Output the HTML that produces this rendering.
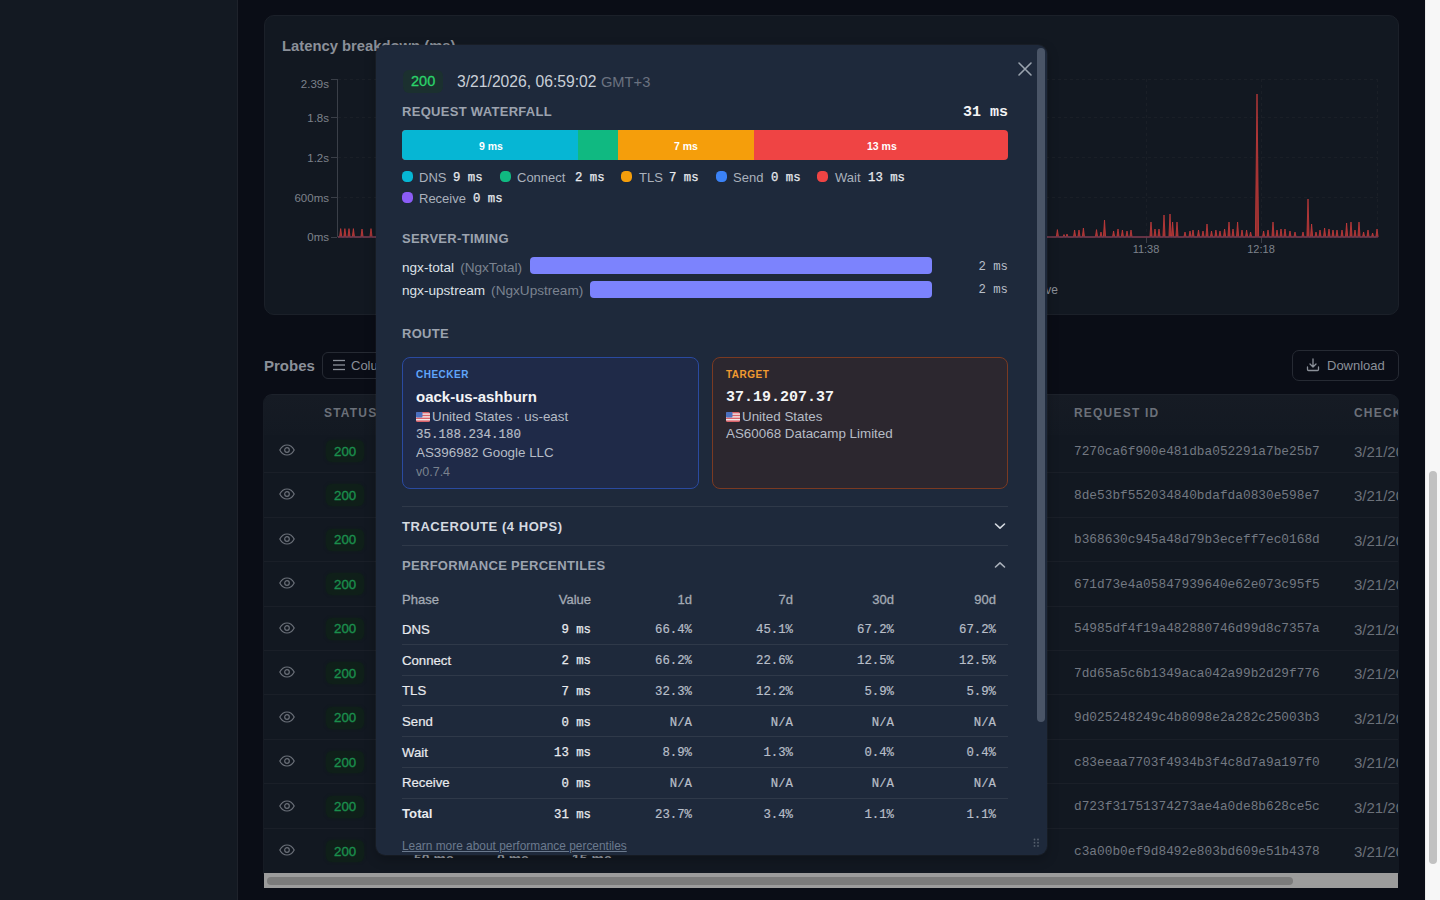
<!DOCTYPE html>
<html><head><meta charset="utf-8">
<style>
*{box-sizing:border-box;margin:0;padding:0}
html,body{width:1440px;height:900px;overflow:hidden;background:#0a0d16;font-family:"Liberation Sans",sans-serif;}
.abs{position:absolute}
.mono{font-family:"Liberation Mono",monospace}
#sidebar{left:0;top:0;width:238px;height:900px;background:#131922;border-right:1px solid #1e222b}
#vscroll{left:1425px;top:0;width:15px;height:900px;background:#f7f7f7;border-left:1px solid #ececec}
#vthumb{left:1429px;top:471px;width:8px;height:393px;border-radius:4px;background:#c1c1c1}
.card{background:#121821;border:1px solid #1b2029;border-radius:10px}
.t{position:absolute;white-space:nowrap;line-height:1}
</style></head><body>
<div id="sidebar" class="abs"></div>
<div id="vscroll" class="abs"></div>
<div id="vthumb" class="abs"></div>

<!-- chart card -->
<div class="abs card" style="left:264px;top:15px;width:1135px;height:300px"></div>
<div class="t" style="left:282px;top:39px;font-size:14.8px;font-weight:bold;color:#8b9099">Latency breakdown (ms)</div>
<svg class="abs" style="left:0;top:0" width="1440" height="330">
 <g font-family="Liberation Sans" font-size="11.5" fill="#7d828b" text-anchor="end">
  <text x="329" y="88">2.39s</text>
  <text x="329" y="122">1.8s</text>
  <text x="329" y="162">1.2s</text>
  <text x="329" y="202">600ms</text>
  <text x="329" y="241">0ms</text>
 </g>
 <g stroke="#3a3f48" stroke-width="1">
  <line x1="337.5" y1="79" x2="337.5" y2="237"/>
  <line x1="331" y1="79.5" x2="337" y2="79.5"/>
  <line x1="331" y1="117.5" x2="337" y2="117.5"/>
  <line x1="331" y1="157.5" x2="337" y2="157.5"/>
  <line x1="331" y1="197.5" x2="337" y2="197.5"/>
  <line x1="331" y1="237.5" x2="337" y2="237.5"/>
  <line x1="1146.5" y1="237" x2="1146.5" y2="243"/>
  <line x1="1261.5" y1="237" x2="1261.5" y2="243"/>
 </g>
 <g stroke="#1a1f27" stroke-width="1" stroke-dasharray="3 3">
  <line x1="338" y1="79.5" x2="1378" y2="79.5"/>
  <line x1="338" y1="117.5" x2="1378" y2="117.5"/>
  <line x1="338" y1="157.5" x2="1378" y2="157.5"/>
  <line x1="338" y1="197.5" x2="1378" y2="197.5"/>
  <line x1="1146.5" y1="79" x2="1146.5" y2="237"/>
  <line x1="1261.5" y1="79" x2="1261.5" y2="237"/>
  <line x1="1377.5" y1="79" x2="1377.5" y2="237"/>
 </g>
 <path d="M338 237 L339.6 237 L340.7 228.6 L341.8 237 L343.8 237 L344.9 228.6 L346.0 237 L347.9 237 L349.0 228.6 L350.1 237 L352.3 237 L353.4 228.6 L354.5 237 L360.9 237 L362.0 229.0 L363.1 237 L369.9 237 L371.0 228.6 L372.1 237 L1056.3 237 L1057.4 229.6 L1058.5 237 L1062.9 237 L1064.0 234.5 L1065.1 237 L1065.9 237 L1067.0 234.0 L1068.1 237 L1073.5 237 L1074.6 230.0 L1075.7 237 L1077.9 237 L1079.0 230.0 L1080.1 237 L1082.3 237 L1083.4 228.0 L1084.5 237 L1095.4 237 L1096.5 229.6 L1097.6 237 L1099.9 237 L1101.0 232.0 L1102.1 237 L1103.4 237 L1104.5 220.0 L1105.6 237 L1112.5 237 L1113.6 231.0 L1114.7 237 L1116.9 237 L1118.0 229.0 L1119.1 237 L1121.3 237 L1122.4 230.0 L1123.5 237 L1125.9 237 L1127.0 231.0 L1128.1 237 L1129.9 237 L1131.0 230.0 L1132.1 237 L1149.9 237 L1151.0 222.0 L1152.1 237 L1153.9 237 L1155.0 229.0 L1156.1 237 L1157.9 237 L1159.0 229.0 L1160.1 237 L1162.9 237 L1164.0 215.0 L1165.1 237 L1168.9 237 L1170.0 214.0 L1171.1 237 L1171.5 237 L1172.6 222.0 L1173.7 237 L1175.9 237 L1177.0 222.0 L1178.1 237 L1183.9 237 L1185.0 232.0 L1186.1 237 L1188.9 237 L1190.0 231.0 L1191.1 237 L1191.9 237 L1193.0 230.0 L1194.1 237 L1197.4 237 L1198.5 230.0 L1199.6 237 L1201.9 237 L1203.0 231.0 L1204.1 237 L1205.9 237 L1207.0 224.0 L1208.1 237 L1210.4 237 L1211.5 231.0 L1212.6 237 L1214.8 237 L1215.9 230.0 L1217.0 237 L1218.9 237 L1220.0 231.0 L1221.1 237 L1223.5 237 L1224.6 229.0 L1225.7 237 L1227.9 237 L1229.0 222.0 L1230.1 237 L1231.9 237 L1233.0 229.0 L1234.1 237 L1236.5 237 L1237.6 222.0 L1238.7 237 L1240.9 237 L1242.0 230.0 L1243.1 237 L1245.5 237 L1246.6 230.0 L1247.7 237 L1249.5 237 L1250.6 232.0 L1251.7 237 L1255.4 237 L1257.0 94.0 L1258.6 237 L1262.5 237 L1263.6 231.0 L1264.7 237 L1266.9 237 L1268.0 230.0 L1269.1 237 L1271.9 237 L1273.0 222.0 L1274.1 237 L1275.9 237 L1277.0 230.0 L1278.1 237 L1279.9 237 L1281.0 229.0 L1282.1 237 L1283.9 237 L1285.0 229.0 L1286.1 237 L1288.9 237 L1290.0 231.0 L1291.1 237 L1293.9 237 L1295.0 232.0 L1296.1 237 L1301.9 237 L1303.0 232.0 L1304.1 237 L1306.9 237 L1308.0 199.0 L1309.1 237 L1310.5 237 L1311.6 224.0 L1312.7 237 L1314.9 237 L1316.0 232.0 L1317.1 237 L1318.9 237 L1320.0 230.0 L1321.1 237 L1323.5 237 L1324.6 228.0 L1325.7 237 L1327.9 237 L1329.0 229.0 L1330.1 237 L1331.9 237 L1333.0 230.0 L1334.1 237 L1335.9 237 L1337.0 230.0 L1338.1 237 L1340.9 237 L1342.0 230.0 L1343.1 237 L1345.5 237 L1346.6 223.0 L1347.7 237 L1349.9 237 L1351.0 222.0 L1352.1 237 L1353.9 237 L1355.0 230.0 L1356.1 237 L1357.9 237 L1359.0 222.0 L1360.1 237 L1362.5 237 L1363.6 232.0 L1364.7 237 L1366.9 237 L1368.0 230.0 L1369.1 237 L1371.5 237 L1372.6 233.0 L1373.7 237 L1375.9 237 L1377.0 229.0 L1378.1 237 L1378 237" fill="#98302f" stroke="#c63b3b" stroke-width="0.8"/>
 <line x1="338" y1="237" x2="1378" y2="237" stroke="#69384f" stroke-width="1.3"/>
 <g font-family="Liberation Sans" font-size="11" fill="#7d828b" text-anchor="middle">
  <text x="1146" y="253">11:38</text>
  <text x="1261" y="253">12:18</text>
 </g>
 <text x="1058" y="294" font-family="Liberation Sans" font-size="12" fill="#8b9099" text-anchor="end">Live</text>
</svg>

<!-- probes header -->
<div class="t" style="left:264px;top:358px;font-size:15px;font-weight:bold;color:#8b9099">Probes</div>
<div class="abs" style="left:322px;top:352px;width:120px;height:27px;border:1px solid #262a33;border-radius:6px"></div>
<svg class="abs" style="left:332px;top:359px" width="14" height="12"><g stroke="#8b9099" stroke-width="1.3"><line x1="1" y1="1.5" x2="13" y2="1.5"/><line x1="1" y1="6" x2="13" y2="6"/><line x1="1" y1="10.5" x2="13" y2="10.5"/></g></svg>
<div class="t" style="left:351px;top:359px;font-size:13px;color:#8b9099">Columns</div>

<div class="abs" style="left:1291.5px;top:349.5px;width:107.5px;height:31px;border:1px solid #262a33;border-radius:7px"></div>
<svg class="abs" style="left:1305px;top:357px" width="16" height="16" viewBox="0 0 16 16" fill="none" stroke="#8b9099" stroke-width="1.3" stroke-linecap="round" stroke-linejoin="round"><path d="M8 2v8M5 7l3 3 3-3M2.5 10v2.5a1 1 0 0 0 1 1h9a1 1 0 0 0 1-1V10"/></svg>
<div class="t" style="left:1327px;top:359px;font-size:13px;color:#8b9099">Download</div>

<!-- table -->
<div class="abs" style="left:263px;top:394px;width:1136px;height:480px;background:#121821;border-radius:9px 9px 0 0;border-top:1px solid #1d222b;border-left:1px solid #161b24"></div><div class="abs" style="left:264px;top:395px;width:1135px;height:40px;background:linear-gradient(#161b24,#131922);border-radius:8px 8px 0 0"></div>
<div id="rows"></div>
<div class="t" style="left:324px;top:407px;font-size:12px;font-weight:bold;letter-spacing:1.2px;color:#6b7079">STATUS</div>
<div class="t" style="left:1074px;top:407px;font-size:12px;font-weight:bold;letter-spacing:1.2px;color:#6b7079">REQUEST ID</div>
<div class="abs" style="left:1354px;top:400px;width:44px;height:20px;overflow:hidden"><div class="t" style="left:0;top:7px;font-size:12px;font-weight:bold;letter-spacing:1.2px;color:#6b7079">CHECKED</div></div>
<svg class="abs" style="left:278px;top:443px" width="18" height="14" viewBox="0 0 18 14" fill="none" stroke="#6b7079" stroke-width="1.2"><path d="M1.8 7C3.6 3.6 6.2 2 9 2S14.4 3.6 16.2 7C14.4 10.4 11.8 12 9 12S3.6 10.4 1.8 7Z"/><circle cx="9" cy="7" r="2.3"/></svg>
<div class="abs" style="left:326px;top:440.0px;width:38px;height:22px;border-radius:6px;background:#0f1f19;box-shadow:0 0 3px #0f1f19"></div>
<div class="t" style="left:334px;top:444.5px;font-size:13.3px;font-weight:normal;-webkit-text-stroke:0.35px #1b8f4d;color:#1b8f4d">200</div>
<div class="t mono" style="left:1074px;top:445.5px;font-size:12.8px;color:#737882">7270ca6f900e481dba052291a7be25b7</div>
<div class="abs" style="left:1354px;top:441.0px;width:44px;height:22px;overflow:hidden"><div class="t" style="left:0;top:3px;font-size:15px;color:#6b7079">3/21/2026</div></div>
<div class="abs" style="left:264px;top:472.1px;width:1134px;height:1px;background:#1a1f28"></div>
<svg class="abs" style="left:278px;top:487px" width="18" height="14" viewBox="0 0 18 14" fill="none" stroke="#6b7079" stroke-width="1.2"><path d="M1.8 7C3.6 3.6 6.2 2 9 2S14.4 3.6 16.2 7C14.4 10.4 11.8 12 9 12S3.6 10.4 1.8 7Z"/><circle cx="9" cy="7" r="2.3"/></svg>
<div class="abs" style="left:326px;top:484.4px;width:38px;height:22px;border-radius:6px;background:#0f1f19;box-shadow:0 0 3px #0f1f19"></div>
<div class="t" style="left:334px;top:488.9px;font-size:13.3px;font-weight:normal;-webkit-text-stroke:0.35px #1b8f4d;color:#1b8f4d">200</div>
<div class="t mono" style="left:1074px;top:489.9px;font-size:12.8px;color:#737882">8de53bf552034840bdafda0830e598e7</div>
<div class="abs" style="left:1354px;top:485.4px;width:44px;height:22px;overflow:hidden"><div class="t" style="left:0;top:3px;font-size:15px;color:#6b7079">3/21/2026</div></div>
<div class="abs" style="left:264px;top:516.6px;width:1134px;height:1px;background:#1a1f28"></div>
<svg class="abs" style="left:278px;top:532px" width="18" height="14" viewBox="0 0 18 14" fill="none" stroke="#6b7079" stroke-width="1.2"><path d="M1.8 7C3.6 3.6 6.2 2 9 2S14.4 3.6 16.2 7C14.4 10.4 11.8 12 9 12S3.6 10.4 1.8 7Z"/><circle cx="9" cy="7" r="2.3"/></svg>
<div class="abs" style="left:326px;top:528.9px;width:38px;height:22px;border-radius:6px;background:#0f1f19;box-shadow:0 0 3px #0f1f19"></div>
<div class="t" style="left:334px;top:533.4px;font-size:13.3px;font-weight:normal;-webkit-text-stroke:0.35px #1b8f4d;color:#1b8f4d">200</div>
<div class="t mono" style="left:1074px;top:534.4px;font-size:12.8px;color:#737882">b368630c945a48d79b3eceff7ec0168d</div>
<div class="abs" style="left:1354px;top:529.9px;width:44px;height:22px;overflow:hidden"><div class="t" style="left:0;top:3px;font-size:15px;color:#6b7079">3/21/2026</div></div>
<div class="abs" style="left:264px;top:561.0px;width:1134px;height:1px;background:#1a1f28"></div>
<svg class="abs" style="left:278px;top:576px" width="18" height="14" viewBox="0 0 18 14" fill="none" stroke="#6b7079" stroke-width="1.2"><path d="M1.8 7C3.6 3.6 6.2 2 9 2S14.4 3.6 16.2 7C14.4 10.4 11.8 12 9 12S3.6 10.4 1.8 7Z"/><circle cx="9" cy="7" r="2.3"/></svg>
<div class="abs" style="left:326px;top:573.4px;width:38px;height:22px;border-radius:6px;background:#0f1f19;box-shadow:0 0 3px #0f1f19"></div>
<div class="t" style="left:334px;top:577.9px;font-size:13.3px;font-weight:normal;-webkit-text-stroke:0.35px #1b8f4d;color:#1b8f4d">200</div>
<div class="t mono" style="left:1074px;top:578.9px;font-size:12.8px;color:#737882">671d73e4a05847939640e62e073c95f5</div>
<div class="abs" style="left:1354px;top:574.4px;width:44px;height:22px;overflow:hidden"><div class="t" style="left:0;top:3px;font-size:15px;color:#6b7079">3/21/2026</div></div>
<div class="abs" style="left:264px;top:605.5px;width:1134px;height:1px;background:#1a1f28"></div>
<svg class="abs" style="left:278px;top:621px" width="18" height="14" viewBox="0 0 18 14" fill="none" stroke="#6b7079" stroke-width="1.2"><path d="M1.8 7C3.6 3.6 6.2 2 9 2S14.4 3.6 16.2 7C14.4 10.4 11.8 12 9 12S3.6 10.4 1.8 7Z"/><circle cx="9" cy="7" r="2.3"/></svg>
<div class="abs" style="left:326px;top:617.8px;width:38px;height:22px;border-radius:6px;background:#0f1f19;box-shadow:0 0 3px #0f1f19"></div>
<div class="t" style="left:334px;top:622.3px;font-size:13.3px;font-weight:normal;-webkit-text-stroke:0.35px #1b8f4d;color:#1b8f4d">200</div>
<div class="t mono" style="left:1074px;top:623.3px;font-size:12.8px;color:#737882">54985df4f19a482880746d99d8c7357a</div>
<div class="abs" style="left:1354px;top:618.8px;width:44px;height:22px;overflow:hidden"><div class="t" style="left:0;top:3px;font-size:15px;color:#6b7079">3/21/2026</div></div>
<div class="abs" style="left:264px;top:650.0px;width:1134px;height:1px;background:#1a1f28"></div>
<svg class="abs" style="left:278px;top:665px" width="18" height="14" viewBox="0 0 18 14" fill="none" stroke="#6b7079" stroke-width="1.2"><path d="M1.8 7C3.6 3.6 6.2 2 9 2S14.4 3.6 16.2 7C14.4 10.4 11.8 12 9 12S3.6 10.4 1.8 7Z"/><circle cx="9" cy="7" r="2.3"/></svg>
<div class="abs" style="left:326px;top:662.2px;width:38px;height:22px;border-radius:6px;background:#0f1f19;box-shadow:0 0 3px #0f1f19"></div>
<div class="t" style="left:334px;top:666.8px;font-size:13.3px;font-weight:normal;-webkit-text-stroke:0.35px #1b8f4d;color:#1b8f4d">200</div>
<div class="t mono" style="left:1074px;top:667.8px;font-size:12.8px;color:#737882">7dd65a5c6b1349aca042a99b2d29f776</div>
<div class="abs" style="left:1354px;top:663.2px;width:44px;height:22px;overflow:hidden"><div class="t" style="left:0;top:3px;font-size:15px;color:#6b7079">3/21/2026</div></div>
<div class="abs" style="left:264px;top:694.4px;width:1134px;height:1px;background:#1a1f28"></div>
<svg class="abs" style="left:278px;top:710px" width="18" height="14" viewBox="0 0 18 14" fill="none" stroke="#6b7079" stroke-width="1.2"><path d="M1.8 7C3.6 3.6 6.2 2 9 2S14.4 3.6 16.2 7C14.4 10.4 11.8 12 9 12S3.6 10.4 1.8 7Z"/><circle cx="9" cy="7" r="2.3"/></svg>
<div class="abs" style="left:326px;top:706.7px;width:38px;height:22px;border-radius:6px;background:#0f1f19;box-shadow:0 0 3px #0f1f19"></div>
<div class="t" style="left:334px;top:711.2px;font-size:13.3px;font-weight:normal;-webkit-text-stroke:0.35px #1b8f4d;color:#1b8f4d">200</div>
<div class="t mono" style="left:1074px;top:712.2px;font-size:12.8px;color:#737882">9d025248249c4b8098e2a282c25003b3</div>
<div class="abs" style="left:1354px;top:707.7px;width:44px;height:22px;overflow:hidden"><div class="t" style="left:0;top:3px;font-size:15px;color:#6b7079">3/21/2026</div></div>
<div class="abs" style="left:264px;top:738.9px;width:1134px;height:1px;background:#1a1f28"></div>
<svg class="abs" style="left:278px;top:754px" width="18" height="14" viewBox="0 0 18 14" fill="none" stroke="#6b7079" stroke-width="1.2"><path d="M1.8 7C3.6 3.6 6.2 2 9 2S14.4 3.6 16.2 7C14.4 10.4 11.8 12 9 12S3.6 10.4 1.8 7Z"/><circle cx="9" cy="7" r="2.3"/></svg>
<div class="abs" style="left:326px;top:751.2px;width:38px;height:22px;border-radius:6px;background:#0f1f19;box-shadow:0 0 3px #0f1f19"></div>
<div class="t" style="left:334px;top:755.7px;font-size:13.3px;font-weight:normal;-webkit-text-stroke:0.35px #1b8f4d;color:#1b8f4d">200</div>
<div class="t mono" style="left:1074px;top:756.7px;font-size:12.8px;color:#737882">c83eeaa7703f4934b3f4c8d7a9a197f0</div>
<div class="abs" style="left:1354px;top:752.2px;width:44px;height:22px;overflow:hidden"><div class="t" style="left:0;top:3px;font-size:15px;color:#6b7079">3/21/2026</div></div>
<div class="abs" style="left:264px;top:783.3px;width:1134px;height:1px;background:#1a1f28"></div>
<svg class="abs" style="left:278px;top:799px" width="18" height="14" viewBox="0 0 18 14" fill="none" stroke="#6b7079" stroke-width="1.2"><path d="M1.8 7C3.6 3.6 6.2 2 9 2S14.4 3.6 16.2 7C14.4 10.4 11.8 12 9 12S3.6 10.4 1.8 7Z"/><circle cx="9" cy="7" r="2.3"/></svg>
<div class="abs" style="left:326px;top:795.6px;width:38px;height:22px;border-radius:6px;background:#0f1f19;box-shadow:0 0 3px #0f1f19"></div>
<div class="t" style="left:334px;top:800.1px;font-size:13.3px;font-weight:normal;-webkit-text-stroke:0.35px #1b8f4d;color:#1b8f4d">200</div>
<div class="t mono" style="left:1074px;top:801.1px;font-size:12.8px;color:#737882">d723f31751374273ae4a0de8b628ce5c</div>
<div class="abs" style="left:1354px;top:796.6px;width:44px;height:22px;overflow:hidden"><div class="t" style="left:0;top:3px;font-size:15px;color:#6b7079">3/21/2026</div></div>
<div class="abs" style="left:264px;top:827.8px;width:1134px;height:1px;background:#1a1f28"></div>
<svg class="abs" style="left:278px;top:843px" width="18" height="14" viewBox="0 0 18 14" fill="none" stroke="#6b7079" stroke-width="1.2"><path d="M1.8 7C3.6 3.6 6.2 2 9 2S14.4 3.6 16.2 7C14.4 10.4 11.8 12 9 12S3.6 10.4 1.8 7Z"/><circle cx="9" cy="7" r="2.3"/></svg>
<div class="abs" style="left:326px;top:840.0px;width:38px;height:22px;border-radius:6px;background:#0f1f19;box-shadow:0 0 3px #0f1f19"></div>
<div class="t" style="left:334px;top:844.5px;font-size:13.3px;font-weight:normal;-webkit-text-stroke:0.35px #1b8f4d;color:#1b8f4d">200</div>
<div class="t mono" style="left:1074px;top:845.5px;font-size:12.8px;color:#737882">c3a00b0ef9d8492e803bd609e51b4378</div>
<div class="abs" style="left:1354px;top:841.0px;width:44px;height:22px;overflow:hidden"><div class="t" style="left:0;top:3px;font-size:15px;color:#6b7079">3/21/2026</div></div>
<div class="abs" style="left:414px;top:855px;width:60px;height:3px;overflow:hidden"><div class="t" style="left:0;top:-3px;font-size:14px;font-weight:bold;color:#9aa0a8">50 ms</div></div>
<div class="abs" style="left:497px;top:855px;width:60px;height:3px;overflow:hidden"><div class="t" style="left:0;top:-3px;font-size:14px;font-weight:bold;color:#9aa0a8">0 ms</div></div>
<div class="abs" style="left:572px;top:855px;width:60px;height:3px;overflow:hidden"><div class="t" style="left:0;top:-3px;font-size:14px;font-weight:bold;color:#9aa0a8">15 ms</div></div>
<div class="abs" style="left:264px;top:873px;width:1134px;height:15px;background:#9c9c9c"></div>
<div class="abs" style="left:267px;top:877px;width:1026px;height:8px;border-radius:4px;background:#7b7b7b"></div>

<!-- modal -->
<div class="abs" id="modal" style="left:376px;top:45px;width:671px;height:810px;background:#1e293b;border-radius:9px;box-shadow:0 0 0 1px rgba(255,255,255,0.03),0 4px 12px rgba(0,0,0,0.25);overflow:hidden">
<div class="abs" style="left:27.0px;top:24.5px;width:40.0px;height:23.0px;background:#1b302f;border-radius:6px"></div>
<div class="t " style="left:35.0px;top:29.2px;font-size:14.5px;color:#2bd46a;font-weight:normal;-webkit-text-stroke:0.3px #2bd46a">200</div>
<div class="t " style="left:81.0px;top:29.1px;font-size:15.7px;color:#c9cfd8;font-weight:normal;">3/21/2026, 06:59:02 <span style="color:#6b7280;font-size:14.7px">GMT+3</span></div>
<svg class="abs" style="left:641px;top:16px" width="16" height="16" viewBox="0 0 16 16" stroke="#9aa3ae" stroke-width="1.6" stroke-linecap="round"><path d="M2 2L14 14M14 2L2 14"/></svg>
<div class="t " style="left:26.0px;top:59.5px;font-size:13px;color:#9ca3af;font-weight:bold;letter-spacing:0.3px">REQUEST WATERFALL</div>
<div class="t mono" style="right:39.0px;top:59.5px;font-size:15px;color:#f3f4f6;font-weight:bold;">31 ms</div>
<div class="abs" style="left:26.0px;top:85.0px;width:606.0px;height:30.0px;border-radius:4px;overflow:hidden;background:#ef4444"></div>
<div class="abs" style="left:26.0px;top:85.0px;width:176.0px;height:30.0px;background:#06b6d4;border-radius:4px 0 0 4px"></div>
<div class="abs" style="left:202.0px;top:85.0px;width:40.0px;height:30.0px;background:#10b981"></div>
<div class="abs" style="left:242.0px;top:85.0px;width:136.0px;height:30.0px;background:#f59e0b"></div>
<div class="t " style="left:103.0px;top:95.8px;font-size:10.5px;color:#ffffff;font-weight:bold;">9 ms</div>
<div class="t " style="left:298.0px;top:95.8px;font-size:10.5px;color:#ffffff;font-weight:bold;">7 ms</div>
<div class="t " style="left:491.0px;top:95.8px;font-size:10.5px;color:#ffffff;font-weight:bold;">13 ms</div>
<div class="abs" style="left:26.0px;top:126.0px;width:11.0px;height:11.0px;border-radius:4.5px;background:#06b6d4"></div>
<div class="t " style="left:43.0px;top:125.5px;font-size:13px;color:#aab1bb;font-weight:normal;">DNS</div>
<div class="t mono" style="left:77.0px;top:126.8px;font-size:12.3px;color:#e8eaee;font-weight:normal;-webkit-text-stroke:0.25px #e8eaee">9 ms</div>
<div class="abs" style="left:124.0px;top:126.0px;width:11.0px;height:11.0px;border-radius:4.5px;background:#10b981"></div>
<div class="t " style="left:141.0px;top:125.5px;font-size:13px;color:#aab1bb;font-weight:normal;">Connect</div>
<div class="t mono" style="left:199.0px;top:126.8px;font-size:12.3px;color:#e8eaee;font-weight:normal;-webkit-text-stroke:0.25px #e8eaee">2 ms</div>
<div class="abs" style="left:245.0px;top:126.0px;width:11.0px;height:11.0px;border-radius:4.5px;background:#f59e0b"></div>
<div class="t " style="left:263.0px;top:125.5px;font-size:13px;color:#aab1bb;font-weight:normal;">TLS</div>
<div class="t mono" style="left:293.0px;top:126.8px;font-size:12.3px;color:#e8eaee;font-weight:normal;-webkit-text-stroke:0.25px #e8eaee">7 ms</div>
<div class="abs" style="left:339.5px;top:126.0px;width:11.0px;height:11.0px;border-radius:4.5px;background:#3b82f6"></div>
<div class="t " style="left:357.0px;top:125.5px;font-size:13px;color:#aab1bb;font-weight:normal;">Send</div>
<div class="t mono" style="left:395.0px;top:126.8px;font-size:12.3px;color:#e8eaee;font-weight:normal;-webkit-text-stroke:0.25px #e8eaee">0 ms</div>
<div class="abs" style="left:441.0px;top:126.0px;width:11.0px;height:11.0px;border-radius:4.5px;background:#ef4444"></div>
<div class="t " style="left:459.0px;top:125.5px;font-size:13px;color:#aab1bb;font-weight:normal;">Wait</div>
<div class="t mono" style="left:492.0px;top:126.8px;font-size:12.3px;color:#e8eaee;font-weight:normal;-webkit-text-stroke:0.25px #e8eaee">13 ms</div>
<div class="abs" style="left:26.0px;top:147.0px;width:11.0px;height:11.0px;border-radius:4.5px;background:#8b5cf6"></div>
<div class="t " style="left:43.0px;top:146.5px;font-size:13px;color:#aab1bb;font-weight:normal;">Receive</div>
<div class="t mono" style="left:97.0px;top:147.8px;font-size:12.3px;color:#e8eaee;font-weight:normal;-webkit-text-stroke:0.25px #e8eaee">0 ms</div>
<div class="t " style="left:26.0px;top:186.5px;font-size:13px;color:#9ca3af;font-weight:bold;letter-spacing:0.3px">SERVER-TIMING</div>
<div class="t " style="left:26.0px;top:215.7px;font-size:13.6px;color:#dde1e7;font-weight:normal;">ngx-total<span style="color:#7b8390;margin-left:6px">(NgxTotal)</span></div>
<div class="abs" style="left:154.0px;top:212.0px;width:402.0px;height:17.0px;background:#7c83fd;border-radius:4px"></div>
<div class="t mono" style="right:39.0px;top:216.3px;font-size:12.3px;color:#b8bec8;font-weight:normal;">2 ms</div>
<div class="t " style="left:26.0px;top:238.7px;font-size:13.6px;color:#dde1e7;font-weight:normal;">ngx-upstream<span style="color:#7b8390;margin-left:6px">(NgxUpstream)</span></div>
<div class="abs" style="left:214.0px;top:236.0px;width:342.0px;height:17.0px;background:#7c83fd;border-radius:4px"></div>
<div class="t mono" style="right:39.0px;top:238.8px;font-size:12.3px;color:#b8bec8;font-weight:normal;">2 ms</div>
<div class="t " style="left:26.0px;top:281.5px;font-size:13px;color:#9ca3af;font-weight:bold;letter-spacing:0.3px">ROUTE</div>
<div class="abs" style="left:26.0px;top:312.0px;width:297.0px;height:132.0px;background:#1f2a48;border:1px solid #2a4aa0;border-radius:8px"></div>
<div class="abs" style="left:336.0px;top:312.0px;width:296.0px;height:132.0px;background:#2c272f;border:1px solid #7a3a22;border-radius:8px"></div>
<div class="t " style="left:40.0px;top:325.0px;font-size:10px;color:#60a5fa;font-weight:bold;letter-spacing:0.5px">CHECKER</div>
<div class="t " style="left:40.0px;top:344.0px;font-size:15px;color:#f3f4f6;font-weight:bold;">oack-us-ashburn</div>
<div class="t " style="left:40.0px;top:365.3px;font-size:13.4px;color:#b6bcc6;font-weight:normal;"><svg width="14" height="10" viewBox="0 0 14 10" style="vertical-align:-1px;margin-right:2px"><rect width="14" height="10" rx="1.5" fill="#d9626a"/><g fill="#efe6e8"><rect y="1.4" width="14" height="1.4"/><rect y="4.2" width="14" height="1.4"/><rect y="7" width="14" height="1.4"/></g><rect width="6.5" height="5.6" rx="1" fill="#4a70c0"/></svg>United States · us-east</div>
<div class="t mono" style="left:40.0px;top:384.2px;font-size:12.5px;color:#b6bcc6;font-weight:normal;-webkit-text-stroke:0.2px #b6bcc6">35.188.234.180</div>
<div class="t " style="left:40.0px;top:401.3px;font-size:13.4px;color:#b6bcc6;font-weight:normal;">AS396982 Google LLC</div>
<div class="t " style="left:40.0px;top:420.8px;font-size:12.5px;color:#7a828e;font-weight:normal;">v0.7.4</div>
<div class="t " style="left:350.0px;top:325.0px;font-size:10px;color:#f19a30;font-weight:bold;letter-spacing:0.5px">TARGET</div>
<div class="t mono" style="left:350.0px;top:344.5px;font-size:15px;color:#f3f4f6;font-weight:bold;">37.19.207.37</div>
<div class="t " style="left:350.0px;top:365.3px;font-size:13.4px;color:#b6bcc6;font-weight:normal;"><svg width="14" height="10" viewBox="0 0 14 10" style="vertical-align:-1px;margin-right:2px"><rect width="14" height="10" rx="1.5" fill="#d9626a"/><g fill="#efe6e8"><rect y="1.4" width="14" height="1.4"/><rect y="4.2" width="14" height="1.4"/><rect y="7" width="14" height="1.4"/></g><rect width="6.5" height="5.6" rx="1" fill="#4a70c0"/></svg>United States</div>
<div class="t " style="left:350.0px;top:382.3px;font-size:13.4px;color:#b6bcc6;font-weight:normal;">AS60068 Datacamp Limited</div>
<div class="abs" style="left:26.0px;top:461.0px;width:606.0px;height:1.0px;background:#2f3949"></div>
<div class="t " style="left:26.0px;top:474.5px;font-size:13px;color:#d5dae1;font-weight:bold;letter-spacing:0.55px">TRACEROUTE (4 HOPS)</div>
<svg class="abs" style="left:617px;top:476px" width="14" height="10" viewBox="0 0 14 10" fill="none" stroke="#d5dae1" stroke-width="1.6" stroke-linecap="round" stroke-linejoin="round"><path d="M2.5 3L7 7.2L11.5 3"/></svg>
<div class="abs" style="left:26.0px;top:500.0px;width:606.0px;height:1.0px;background:#2f3949"></div>
<div class="t " style="left:26.0px;top:513.5px;font-size:13px;color:#9ca3af;font-weight:bold;letter-spacing:0.3px">PERFORMANCE PERCENTILES</div>
<svg class="abs" style="left:617px;top:515px" width="14" height="10" viewBox="0 0 14 10" fill="none" stroke="#aab1bb" stroke-width="1.6" stroke-linecap="round" stroke-linejoin="round"><path d="M2.5 7L7 2.8L11.5 7"/></svg>
<div class="t " style="left:26.0px;top:547.5px;font-size:13px;color:#a3aab4;font-weight:normal;-webkit-text-stroke:0.3px #a3aab4">Phase</div>
<div class="t " style="right:456.0px;top:547.5px;font-size:13px;color:#a3aab4;font-weight:normal;-webkit-text-stroke:0.3px #a3aab4">Value</div>
<div class="t " style="right:355.0px;top:547.5px;font-size:13px;color:#a3aab4;font-weight:normal;-webkit-text-stroke:0.3px #a3aab4">1d</div>
<div class="t " style="right:254.0px;top:547.5px;font-size:13px;color:#a3aab4;font-weight:normal;-webkit-text-stroke:0.3px #a3aab4">7d</div>
<div class="t " style="right:153.0px;top:547.5px;font-size:13px;color:#a3aab4;font-weight:normal;-webkit-text-stroke:0.3px #a3aab4">30d</div>
<div class="t " style="right:51.0px;top:547.5px;font-size:13px;color:#a3aab4;font-weight:normal;-webkit-text-stroke:0.3px #a3aab4">90d</div>
<div class="t " style="left:26.0px;top:577.9px;font-size:13.2px;color:#e8eaee;font-weight:normal;-webkit-text-stroke:0.2px #e8eaee">DNS</div>
<div class="t mono" style="right:456.0px;top:579.4px;font-size:12.3px;color:#e8eaee;font-weight:normal;-webkit-text-stroke:0.25px #e8eaee">9 ms</div>
<div class="t mono" style="right:355.0px;top:579.4px;font-size:12.3px;color:#b8bec8;font-weight:normal;-webkit-text-stroke:0.2px #b8bec8">66.4%</div>
<div class="t mono" style="right:254.0px;top:579.4px;font-size:12.3px;color:#b8bec8;font-weight:normal;-webkit-text-stroke:0.2px #b8bec8">45.1%</div>
<div class="t mono" style="right:153.0px;top:579.4px;font-size:12.3px;color:#b8bec8;font-weight:normal;-webkit-text-stroke:0.2px #b8bec8">67.2%</div>
<div class="t mono" style="right:51.0px;top:579.4px;font-size:12.3px;color:#b8bec8;font-weight:normal;-webkit-text-stroke:0.2px #b8bec8">67.2%</div>
<div class="abs" style="left:26.0px;top:599.0px;width:606.0px;height:1.0px;background:#2f3949"></div>
<div class="t " style="left:26.0px;top:608.6px;font-size:13.2px;color:#e8eaee;font-weight:normal;-webkit-text-stroke:0.2px #e8eaee">Connect</div>
<div class="t mono" style="right:456.0px;top:610.1px;font-size:12.3px;color:#e8eaee;font-weight:normal;-webkit-text-stroke:0.25px #e8eaee">2 ms</div>
<div class="t mono" style="right:355.0px;top:610.1px;font-size:12.3px;color:#b8bec8;font-weight:normal;-webkit-text-stroke:0.2px #b8bec8">66.2%</div>
<div class="t mono" style="right:254.0px;top:610.1px;font-size:12.3px;color:#b8bec8;font-weight:normal;-webkit-text-stroke:0.2px #b8bec8">22.6%</div>
<div class="t mono" style="right:153.0px;top:610.1px;font-size:12.3px;color:#b8bec8;font-weight:normal;-webkit-text-stroke:0.2px #b8bec8">12.5%</div>
<div class="t mono" style="right:51.0px;top:610.1px;font-size:12.3px;color:#b8bec8;font-weight:normal;-webkit-text-stroke:0.2px #b8bec8">12.5%</div>
<div class="abs" style="left:26.0px;top:629.7px;width:606.0px;height:1.0px;background:#2f3949"></div>
<div class="t " style="left:26.0px;top:639.3px;font-size:13.2px;color:#e8eaee;font-weight:normal;-webkit-text-stroke:0.2px #e8eaee">TLS</div>
<div class="t mono" style="right:456.0px;top:640.8px;font-size:12.3px;color:#e8eaee;font-weight:normal;-webkit-text-stroke:0.25px #e8eaee">7 ms</div>
<div class="t mono" style="right:355.0px;top:640.8px;font-size:12.3px;color:#b8bec8;font-weight:normal;-webkit-text-stroke:0.2px #b8bec8">32.3%</div>
<div class="t mono" style="right:254.0px;top:640.8px;font-size:12.3px;color:#b8bec8;font-weight:normal;-webkit-text-stroke:0.2px #b8bec8">12.2%</div>
<div class="t mono" style="right:153.0px;top:640.8px;font-size:12.3px;color:#b8bec8;font-weight:normal;-webkit-text-stroke:0.2px #b8bec8">5.9%</div>
<div class="t mono" style="right:51.0px;top:640.8px;font-size:12.3px;color:#b8bec8;font-weight:normal;-webkit-text-stroke:0.2px #b8bec8">5.9%</div>
<div class="abs" style="left:26.0px;top:660.4px;width:606.0px;height:1.0px;background:#2f3949"></div>
<div class="t " style="left:26.0px;top:670.0px;font-size:13.2px;color:#e8eaee;font-weight:normal;-webkit-text-stroke:0.2px #e8eaee">Send</div>
<div class="t mono" style="right:456.0px;top:671.5px;font-size:12.3px;color:#e8eaee;font-weight:normal;-webkit-text-stroke:0.25px #e8eaee">0 ms</div>
<div class="t mono" style="right:355.0px;top:671.5px;font-size:12.3px;color:#b8bec8;font-weight:normal;-webkit-text-stroke:0.2px #b8bec8">N/A</div>
<div class="t mono" style="right:254.0px;top:671.5px;font-size:12.3px;color:#b8bec8;font-weight:normal;-webkit-text-stroke:0.2px #b8bec8">N/A</div>
<div class="t mono" style="right:153.0px;top:671.5px;font-size:12.3px;color:#b8bec8;font-weight:normal;-webkit-text-stroke:0.2px #b8bec8">N/A</div>
<div class="t mono" style="right:51.0px;top:671.5px;font-size:12.3px;color:#b8bec8;font-weight:normal;-webkit-text-stroke:0.2px #b8bec8">N/A</div>
<div class="abs" style="left:26.0px;top:691.1px;width:606.0px;height:1.0px;background:#2f3949"></div>
<div class="t " style="left:26.0px;top:700.7px;font-size:13.2px;color:#e8eaee;font-weight:normal;-webkit-text-stroke:0.2px #e8eaee">Wait</div>
<div class="t mono" style="right:456.0px;top:702.1px;font-size:12.3px;color:#e8eaee;font-weight:normal;-webkit-text-stroke:0.25px #e8eaee">13 ms</div>
<div class="t mono" style="right:355.0px;top:702.1px;font-size:12.3px;color:#b8bec8;font-weight:normal;-webkit-text-stroke:0.2px #b8bec8">8.9%</div>
<div class="t mono" style="right:254.0px;top:702.1px;font-size:12.3px;color:#b8bec8;font-weight:normal;-webkit-text-stroke:0.2px #b8bec8">1.3%</div>
<div class="t mono" style="right:153.0px;top:702.1px;font-size:12.3px;color:#b8bec8;font-weight:normal;-webkit-text-stroke:0.2px #b8bec8">0.4%</div>
<div class="t mono" style="right:51.0px;top:702.1px;font-size:12.3px;color:#b8bec8;font-weight:normal;-webkit-text-stroke:0.2px #b8bec8">0.4%</div>
<div class="abs" style="left:26.0px;top:721.8px;width:606.0px;height:1.0px;background:#2f3949"></div>
<div class="t " style="left:26.0px;top:731.4px;font-size:13.2px;color:#e8eaee;font-weight:normal;-webkit-text-stroke:0.2px #e8eaee">Receive</div>
<div class="t mono" style="right:456.0px;top:732.9px;font-size:12.3px;color:#e8eaee;font-weight:normal;-webkit-text-stroke:0.25px #e8eaee">0 ms</div>
<div class="t mono" style="right:355.0px;top:732.9px;font-size:12.3px;color:#b8bec8;font-weight:normal;-webkit-text-stroke:0.2px #b8bec8">N/A</div>
<div class="t mono" style="right:254.0px;top:732.9px;font-size:12.3px;color:#b8bec8;font-weight:normal;-webkit-text-stroke:0.2px #b8bec8">N/A</div>
<div class="t mono" style="right:153.0px;top:732.9px;font-size:12.3px;color:#b8bec8;font-weight:normal;-webkit-text-stroke:0.2px #b8bec8">N/A</div>
<div class="t mono" style="right:51.0px;top:732.9px;font-size:12.3px;color:#b8bec8;font-weight:normal;-webkit-text-stroke:0.2px #b8bec8">N/A</div>
<div class="abs" style="left:26.0px;top:752.5px;width:606.0px;height:1.0px;background:#2f3949"></div>
<div class="t " style="left:26.0px;top:762.1px;font-size:13.2px;color:#e8eaee;font-weight:bold;">Total</div>
<div class="t mono" style="right:456.0px;top:763.6px;font-size:12.3px;color:#e8eaee;font-weight:normal;-webkit-text-stroke:0.25px #e8eaee">31 ms</div>
<div class="t mono" style="right:355.0px;top:763.6px;font-size:12.3px;color:#b8bec8;font-weight:normal;-webkit-text-stroke:0.2px #b8bec8">23.7%</div>
<div class="t mono" style="right:254.0px;top:763.6px;font-size:12.3px;color:#b8bec8;font-weight:normal;-webkit-text-stroke:0.2px #b8bec8">3.4%</div>
<div class="t mono" style="right:153.0px;top:763.6px;font-size:12.3px;color:#b8bec8;font-weight:normal;-webkit-text-stroke:0.2px #b8bec8">1.1%</div>
<div class="t mono" style="right:51.0px;top:763.6px;font-size:12.3px;color:#b8bec8;font-weight:normal;-webkit-text-stroke:0.2px #b8bec8">1.1%</div>
<div class="t " style="left:26.0px;top:795.5px;font-size:11.9px;color:#6b7a8e;font-weight:normal;"><u style="text-underline-offset:1px">Learn more about performance percentiles</u></div>
<div class="abs" style="left:661.0px;top:3.0px;width:8.0px;height:674.0px;background:#4a5567;border-radius:4px"></div>
<svg class="abs" style="left:657px;top:793px" width="7" height="9" fill="#56606e"><circle cx="1.5" cy="1.5" r="0.9"/><circle cx="5.0" cy="1.5" r="0.9"/><circle cx="1.5" cy="4.7" r="0.9"/><circle cx="5.0" cy="4.7" r="0.9"/><circle cx="1.5" cy="7.9" r="0.9"/><circle cx="5.0" cy="7.9" r="0.9"/></svg>
</div>
</body></html>
